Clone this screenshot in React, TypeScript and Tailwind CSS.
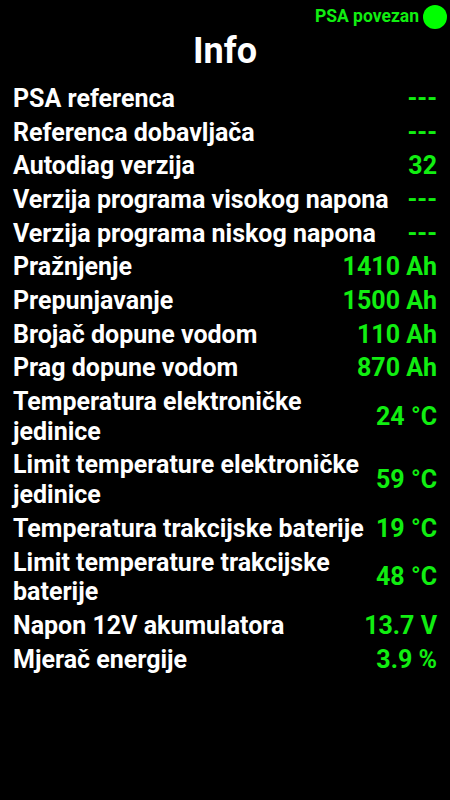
import React from "react";

const rows: [string, string][] = [
  ["PSA referenca", "---"],
  ["Referenca dobavljača", "---"],
  ["Autodiag verzija", "32"],
  ["Verzija programa visokog napona", "---"],
  ["Verzija programa niskog napona", "---"],
  ["Pražnjenje", "1410 Ah"],
  ["Prepunjavanje", "1500 Ah"],
  ["Brojač dopune vodom", "110 Ah"],
  ["Prag dopune vodom", "870 Ah"],
  ["Temperatura elektroničke jedinice", "24 °C"],
  ["Limit temperature elektroničke jedinice", "59 °C"],
  ["Temperatura trakcijske baterije", "19 °C"],
  ["Limit temperature trakcijske baterije", "48 °C"],
  ["Napon 12V akumulatora", "13.7 V"],
  ["Mjerač energije", "3.9 %"],
];

export default function App() {
  return (
    <div className="w-[450px] h-[800px] bg-black text-white font-['Roboto',sans-serif] overflow-hidden">
      <div className="flex justify-end items-center gap-[4px] pt-[5px] pr-[3px] h-[29px]">
        <span className="text-[17.5px] font-bold text-[#11ee11] leading-none">PSA povezan</span>
        <span className="w-[24px] h-[24px] rounded-full bg-[#00ff00]" />
      </div>
      <h1 className="text-center text-[36px] font-bold leading-[42px] mt-[1px]">Info</h1>
      <div className="px-[13px] pt-[10px]">
        {rows.map(([l, v]) => (
          <div key={l} className="flex items-center justify-between gap-3 py-[1.95px]">
            <span className="text-[25px] font-bold leading-[29.8px]">{l}</span>
            <span className="text-[25px] font-bold leading-[29.8px] text-[#11ee11] whitespace-nowrap">{v}</span>
          </div>
        ))}
      </div>
    </div>
  );
}
